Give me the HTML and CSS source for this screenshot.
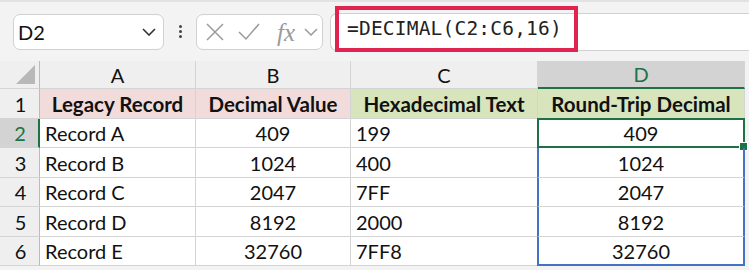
FILE: index.html
```html
<!DOCTYPE html>
<html>
<head>
  <title>DECIMAL round trip</title>
  <link rel="stylesheet" href="styles.css">
</head>
<body>

  <div class="toolbar">
    <div class="namebox">
      <span>D2</span>
      <svg class="chev" width="14" height="8" viewBox="0 0 14 8"><polyline points="1,1 7,7 13,1" fill="none" stroke="#333" stroke-width="1.6"/></svg>
    </div>
    <div class="dots"><i></i><i></i><i></i></div>
    <div class="funcbox">
      <svg width="20" height="20" viewBox="0 0 20 20"><path d="M2 2 L18 18 M18 2 L2 18" stroke="#9a9a9a" stroke-width="1.5"/></svg>
      <svg width="22" height="20" viewBox="0 0 22 20"><polyline points="1,10 8,17 21,2" fill="none" stroke="#9a9a9a" stroke-width="1.5"/></svg>
      <span class="fx">fx</span>
      <svg width="14" height="8" viewBox="0 0 14 8"><polyline points="1,1 7,7 13,1" fill="none" stroke="#9a9a9a" stroke-width="1.5"/></svg>
    </div>
    <div class="formula">
      <div class="formula-box">=DECIMAL(C2:C6,16)</div>
    </div>
  </div>

  <div class="sheet">
    <div class="corner"><span class="tri"></span></div>
    <div class="colhead">A</div>
    <div class="colhead">B</div>
    <div class="colhead">C</div>
    <div class="colhead active">D</div>

    <div class="rowhead">1</div>
    <div class="cell hdr pink">Legacy Record</div>
    <div class="cell hdr pink">Decimal Value</div>
    <div class="cell hdr green">Hexadecimal Text</div>
    <div class="cell hdr green">Round-Trip Decimal</div>

    <div class="rowhead active">2</div>
    <div class="cell">Record A</div>
    <div class="cell mid">409</div>
    <div class="cell">199</div>
    <div class="cell mid spill first">409<span class="handle"></span></div>

    <div class="rowhead">3</div>
    <div class="cell">Record B</div>
    <div class="cell mid">1024</div>
    <div class="cell">400</div>
    <div class="cell mid spill">1024</div>

    <div class="rowhead">4</div>
    <div class="cell">Record C</div>
    <div class="cell mid">2047</div>
    <div class="cell">7FF</div>
    <div class="cell mid spill">2047</div>

    <div class="rowhead">5</div>
    <div class="cell">Record D</div>
    <div class="cell mid">8192</div>
    <div class="cell">2000</div>
    <div class="cell mid spill">8192</div>

    <div class="rowhead">6</div>
    <div class="cell">Record E</div>
    <div class="cell mid">32760</div>
    <div class="cell">7FF8</div>
    <div class="cell mid spill last">32760</div>
  </div>

</body>
</html>
```

FILE: styles.css
```css
body {
  margin: 0;
  width: 749px;
  height: 270px;
  overflow: hidden;
  background: #f3f3f3;
  font-family: Lato, 'Liberation Sans', sans-serif;
  color: #111;
}

.toolbar {
  height: 61px;
  box-sizing: border-box;
  border-top: 2px solid #e2e2e2;
  display: flex;
  align-items: center;
  padding-left: 13px;
  background: #f3f3f3;
}

.namebox {
  width: 151px;
  height: 36px;
  box-sizing: border-box;
  background: #fff;
  border: 1px solid #d0d0d0;
  border-radius: 7px;
  display: flex;
  align-items: center;
  justify-content: space-between;
  padding: 0 7px 0 4px;
  font-size: 20px;
  margin-top: 1px;
}

.dots {
  width: 32px;
  display: flex;
  flex-direction: column;
  align-items: center;
  gap: 2px;
}

.dots i {
  width: 3px;
  height: 3px;
  background: #444;
  border-radius: 50%;
}

.funcbox {
  width: 127px;
  height: 36px;
  box-sizing: border-box;
  background: #fff;
  border: 1px solid #d0d0d0;
  border-radius: 7px;
  display: flex;
  align-items: center;
  gap: 13px;
  padding-left: 8px;
  margin-top: 1px;
}

.fx {
  font-family: 'Liberation Serif', serif;
  font-style: italic;
  font-size: 25px;
  color: #9a9a9a;
  margin-left: 4px;
  margin-right: -4px;
  line-height: 1;
}

.formula {
  flex: 1;
  height: 36px;
  margin-left: 7px;
  margin-top: 1px;
  background: #fff;
  border-top: 1px solid #d0d0d0;
  border-bottom: 1px solid #d0d0d0;
  border-left: 1px solid #d0d0d0;
  border-radius: 7px 0 0 7px;
  position: relative;
}

.formula-box {
  position: absolute;
  left: 4px;
  top: -8px;
  width: 243px;
  height: 46px;
  box-sizing: border-box;
  border: 4px solid #e0234f;
  font-family: 'DejaVu Sans Mono', monospace;
  font-size: 19.5px;
  letter-spacing: 0.2px;
  line-height: 38px;
  padding-left: 8px;
  color: #222;
}

.sheet {
  display: grid;
  grid-template-columns: 40px 156px 155px 187px 207px;
  grid-template-rows: 28px 30px 29px 30px 29px 30px 29px;
  width: 745px;
  background: #fff;
}

.corner, .colhead, .rowhead {
  background: #efefef;
  border-right: 1px solid #d4d4d4;
  border-bottom: 1px solid #d4d4d4;
  box-sizing: border-box;
  font-size: 20px;
  display: flex;
  align-items: center;
  justify-content: center;
}

.corner {
  position: relative;
  border-right: 1px solid #bbb;
}

.tri {
  position: absolute;
  right: 4px;
  bottom: 4px;
  width: 0;
  height: 0;
  border-left: 19px solid transparent;
  border-bottom: 19px solid #b8b8b8;
}

.colhead.active {
  background: #d3d3d3;
  color: #1e7145;
  border-bottom: 2px solid #1e7145;
}

.rowhead {
  border-right: 1px solid #bbb;
  padding-left: 2px;
}

.rowhead.active {
  background: #d3d3d3;
  color: #1e7145;
  border-right: 2px solid #1e7145;
}

.cell {
  border-right: 1px solid #d4d4d4;
  border-bottom: 1px solid #d4d4d4;
  box-sizing: border-box;
  font-size: 20px;
  display: flex;
  align-items: center;
  padding-left: 5px;
  white-space: nowrap;
  position: relative;
}

.mid {
  justify-content: center;
  padding-left: 0;
}

.hdr {
  font-weight: bold;
  font-size: 20.5px;
  justify-content: center;
  padding-left: 0;
}

.pink {
  background: #f2dcdb;
}

.green {
  background: #d8e4bc;
}

.spill {
  border-left: 2px solid #4472c4;
  border-right: 2px solid #4472c4;
  margin-left: -1px;
}

.spill.first {
  border: 2px solid #1e7145;
  margin-top: -1px;
}

.spill.last {
  border-bottom: 2px solid #4472c4;
}

.handle {
  position: absolute;
  right: -5px;
  bottom: -5px;
  width: 7px;
  height: 7px;
  background: #1e7145;
  border: 1px solid #fff;
}
```
